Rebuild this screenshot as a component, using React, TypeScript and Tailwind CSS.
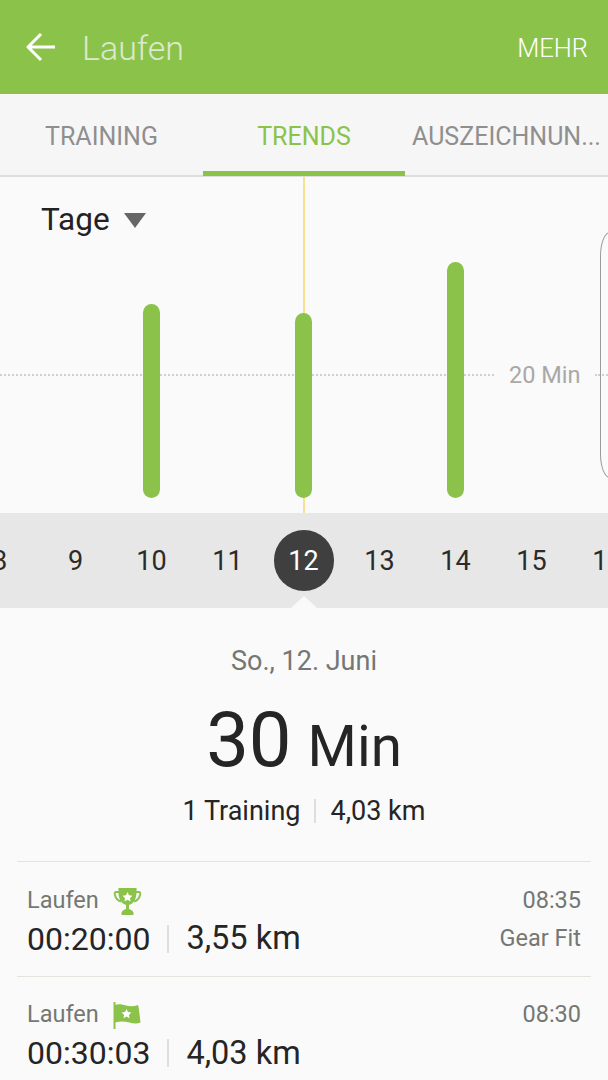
import React from "react";

const Trophy = () => (
  <svg width="29" height="28" viewBox="0 0 29 28">
    <path d="M6 5H3c-1 0-1.500 1-1.200 2.500C2.600 11 4.500 13.500 8 14.500M23 5h3c1 0 1.500 1 1.200 2.500C26.400 11 24.500 13.500 21 14.500" fill="none" stroke="#8bc34a" strokeWidth="2" />
    <path d="M5.500 1h18c.3 7-.5 11-3 14-1.500 1.700-3.300 2.600-4.500 3v4c1.800.4 3.600 1.500 4.500 3.500V28h-12v-2.500c.9-2 2.700-3.100 4.500-3.500v-4c-1.200-.4-3-1.300-4.500-3-2.500-3-3.300-7-3-14z" fill="#8bc34a" />
    <path d="M14.500 5l1.500 3.200 3.500.5-2.500 2.400.6 3.400-3.100-1.700-3.100 1.700.6-3.400-2.500-2.400 3.500-.5z" fill="#fff" />
  </svg>
);

const Flag = () => (
  <svg width="28" height="27" viewBox="0 0 28 27">
    <rect x="0.500" y="0" width="2" height="27" fill="#8bc34a" />
    <path d="M2 3c4-1.500 7-.5 11 .5 4 1 8 1 12-.5 1 3 1 6 1.500 9 .3 3 .7 5.500 1 8.500-4 1.500-7 1-11 0-5-1-9-1.500-14.500 0V3z" fill="#8bc34a" />
    <path d="M13.500 7l1.500 3.100 3.400.5-2.500 2.300.6 3.400-3-1.700-3 1.700.6-3.400-2.500-2.300 3.400-.5z" fill="#fff" />
  </svg>
);

const days = ["8", "9", "10", "11", "12", "13", "14", "15", "16"];
const bars: Record<string, string> = { "10": "h-[194px]", "12": "h-[185px]", "14": "h-[236px]" };

const Row = ({ time, dist, clock, device, icon, last }: { time: string; dist: string; clock: string; device?: string; icon: React.ReactNode; last?: boolean }) => (
  <div className={`mx-[17px] h-[115px] px-[10px] ${last ? "pt-[20px]" : "pt-[21px] border-b border-[#e4e4df]"}`}>
    <div className="flex justify-between items-center h-[36px]">
      <div className="flex items-center gap-[14px]">
        <span className="text-[23.500px] text-[#757773]">Laufen</span>
        {icon}
      </div>
      <span className="text-[23.500px] text-[#757773]">{clock}</span>
    </div>
    <div className={`flex justify-between items-center ${last ? "h-[40px]" : "h-[39px]"}`}>
      <div className="flex items-center text-[32px] text-[#252525]">
        <span>{time}</span>
        <span className="w-[2px] h-[28px] bg-[#dededa] mx-[17px]" />
        <span className="text-[32.500px]">{dist}</span>
      </div>
      {device && <span className="text-[23.500px] text-[#757773]">{device}</span>}
    </div>
  </div>
);

export default function App() {
  return (
    <div className="w-[608px] h-[1080px] overflow-hidden bg-[#fafafa] font-['Roboto',sans-serif]">
      <header className="h-[94px] bg-[#8bc34a] flex items-center pl-[26px] pr-[20px]">
        <svg width="30" height="30" viewBox="0 0 30 30" fill="none" stroke="#fff" strokeWidth="3" strokeLinejoin="round">
          <path d="M2 15h27M15 2L2 15l13 13" />
        </svg>
        <span className="ml-[26px] text-[34px] font-light text-[#dde8d0] pt-[2px]">Laufen</span>
        <span className="ml-auto text-[25.500px] font-light text-white pt-[3px]">MEHR</span>
      </header>
      <nav className="h-[82px] mt-[1px] bg-[#f6f6f6] border-b-2 border-[#dedede] flex text-[25px]">
        <div className="w-[203px] flex items-center justify-center text-[#8f8f8f] pt-[3px]">TRAINING</div>
        <div className="w-[202px] flex items-center justify-center text-[#8bc34a] border-b-[5px] border-[#8bc34a] -mb-[1px] pt-[7px]">TRENDS</div>
        <div className="w-[203px] flex items-center justify-center text-[#8f8f8f] pt-[3px] whitespace-nowrap">AUSZEICHNUN...</div>
      </nav>
      <section className="relative h-[336px] overflow-hidden">
        <div className="absolute left-[303px] top-0 bottom-0 w-[2px] bg-[#f8e08e]" />
        <div className="absolute left-0 w-[494px] top-[197px] border-t-2 border-dotted border-[#cfcfcf]" />
        <div className="absolute left-[595px] w-[13px] top-[197px] border-t-2 border-dotted border-[#cfcfcf]" />
        <div className="absolute left-[509px] top-[182px] text-[23.500px] leading-[32px] text-[#a8a8a8] bg-[#fafafa]">20 Min</div>
        <div className="absolute left-[600px] top-[55px] w-[40px] h-[246px] rounded-[10px/24px] border border-[#9a9a9a]" />
        <div className="absolute left-[41px] top-[23px] flex items-center gap-[14px]">
          <span className="text-[31.500px] leading-[40px] text-[#222]">Tage</span>
          <svg width="22" height="15" viewBox="0 0 22 15"><path d="M0 0h22L11 15z" fill="#666" /></svg>
        </div>
        <div className="relative h-full flex justify-center items-end pb-[15px] pr-[2px]">
          {days.map((d) => (
            <div key={d} className="w-[76px] shrink-0 flex justify-center">
              {bars[d] && <div className={`w-[17px] rounded-full bg-[#8bc34a] ${bars[d]}`} />}
            </div>
          ))}
        </div>
      </section>
      <section className="relative h-[95px] bg-[#e7e7e7] flex justify-center items-center overflow-hidden">
        {days.map((d) => (
          <div key={d} className="w-[76px] shrink-0 flex justify-center">
            <span className={`flex items-center justify-center rounded-full w-[60px] h-[61px] pr-[1px] pt-[1px] text-[27px] ${d === "12" ? "bg-[#3f3f3f] text-white" : "text-[#2b2b2b]"}`}>{d}</span>
          </div>
        ))}
        <svg className="absolute left-[288px] bottom-0" width="32" height="12" viewBox="0 0 32 12"><path d="M3 12L16 0l13 12z" fill="#fafafa" /></svg>
      </section>
      <section className="flex flex-col items-center">
        <div className="mt-[36px] h-[34px] flex items-center text-[27px] text-[#757773]">So., 12. Juni</div>
        <div className="mt-[18px] h-[88px] flex items-baseline text-[#252525]">
          <span className="text-[76px] leading-[88px]">30</span>
          <span className="text-[56.500px] ml-[16px]">Min</span>
        </div>
        <div className="mt-[9px] h-[36px] flex items-center text-[27px] text-[#252525]">
          <span>1 Training</span>
          <span className="w-[2px] h-[24px] bg-[#dededa] mx-[14px]" />
          <span>4,03 km</span>
        </div>
      </section>
      <div className="mt-[32px] mx-[17px] border-t border-[#e4e4df]" />
      <Row time="00:20:00" dist="3,55 km" clock="08:35" device="Gear Fit" icon={<Trophy />} />
      <Row time="00:30:03" dist="4,03 km" clock="08:30" icon={<Flag />} last />
    </div>
  );
}
